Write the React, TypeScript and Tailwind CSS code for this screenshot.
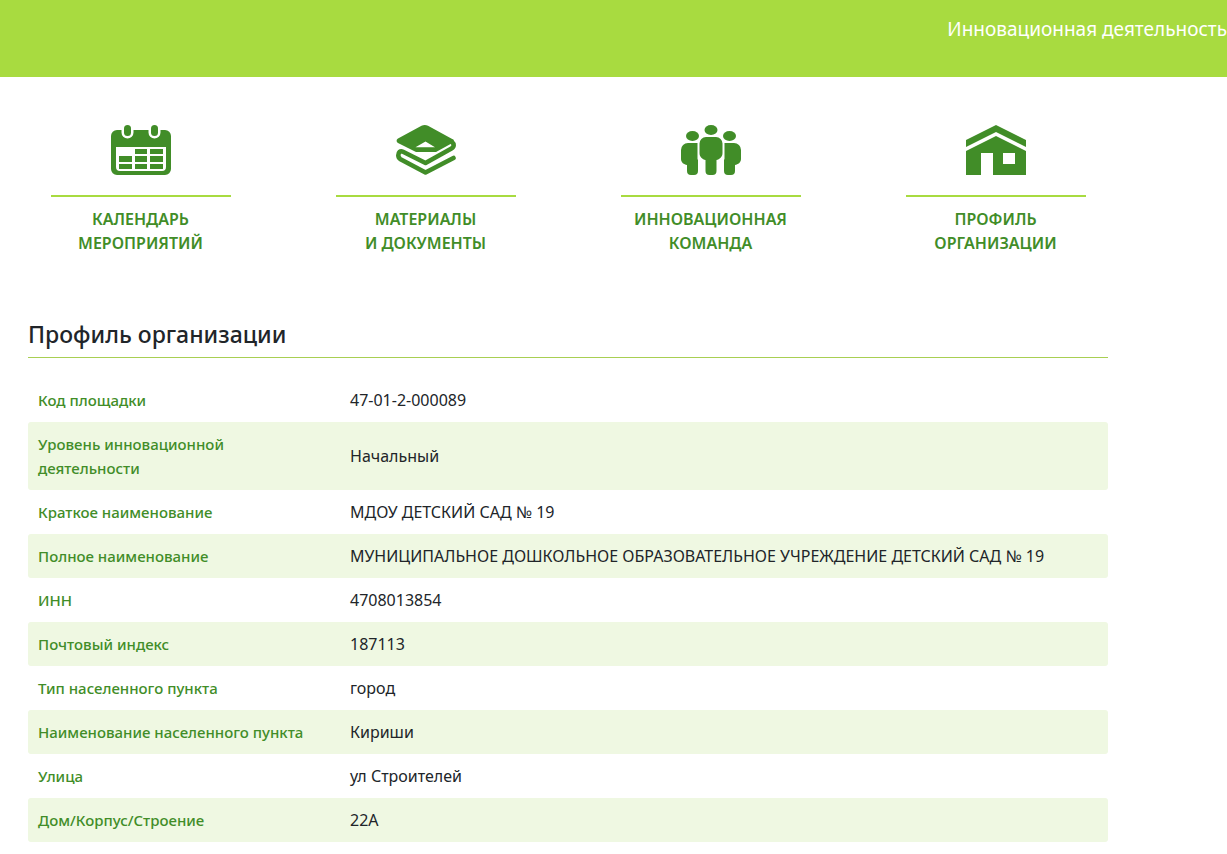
import type { ReactNode } from "react"

function CalendarIcon() {
  return (
    <svg viewBox="0 0 60 50" className="w-[60px] h-[50px]" fill="currentColor" aria-hidden="true">
      <path
        fillRule="evenodd"
        d="M6 5h4.500v2.500a6 6 0 0 0 12 0V5h15v2.500a6 6 0 0 0 12 0V5H54a6 6 0 0 1 6 6v33a6 6 0 0 1-6 6H6a6 6 0 0 1-6-6V11a6 6 0 0 1 6-6ZM5 22v20a4 4 0 0 0 4 4h42a4 4 0 0 0 4-4V22Z"
      />
      <rect x="13" y="0" width="7" height="11" rx="3.500" />
      <rect x="40" y="0" width="7" height="11" rx="3.500" />
      <path d="M24 24h12v5H24zM39 24h13v5H39zM8 31h13v6H8zM24 31h12v6H24zM39 31h13v6H39zM8 39h13v5H8zM24 39h12v5H24zM39 39h13v5H39z" />
    </svg>
  )
}

function BooksIcon() {
  return (
    <svg viewBox="0 0 60 50" className="w-[60px] h-[50px]" aria-hidden="true">
      <path
        fill="currentColor"
        fillRule="evenodd"
        d="M25.500.8 2 13.500c-1.800 1-1.800 3.500 0 4.500L20 27h20l15-8.200 3-3.800L32 .8c-2-1-4.500-1-6.500 0ZM29.500 16.500 39 22.300H19.500Z"
      />
      <path
        fill="none"
        stroke="currentColor"
        strokeWidth="4.600"
        strokeLinecap="round"
        strokeLinejoin="round"
        d="M56 17c2.300 2 2.300 5-.5 6.500L29.500 38 7 26.800c-3-1.500-4.700 1-4.700 3.500 0 2 .7 3 2.200 3.900l25 13.300L57.500 33"
      />
    </svg>
  )
}

function TeamIcon() {
  return (
    <svg viewBox="0 0 60 50" className="w-[60px] h-[50px]" fill="currentColor" aria-hidden="true">
      <ellipse cx="30" cy="5" rx="6.500" ry="5" />
      <ellipse cx="11.500" cy="11" rx="6.500" ry="5" />
      <ellipse cx="48.500" cy="11" rx="6.500" ry="5" />
      <path d="M25 12h10a6.500 6.500 0 0 1 6.500 6.500V28c0 4-3 6.500-6 7v11a4 4 0 0 1-4 4h-3a4 4 0 0 1-4-4V35c-3-.5-6-3-6-7v-9.500A6.500 6.500 0 0 1 25 12Z" />
      <path d="M7 18h9.500v15.500c0 .8.300 1 .5 1.500v11a4 4 0 0 1-4 4h-3a4 4 0 0 1-4-4v-6c-3-.5-6-2.500-6-6v-9a7 7 0 0 1 7-7Z" />
      <path d="M53 18h-9.500v15.500c0 .8-.3 1-.5 1.500v11a4 4 0 0 0 4 4h3a4 4 0 0 0 4-4v-6c3-.5 6-2.500 6-6v-9a7 7 0 0 0-7-7Z" />
    </svg>
  )
}

function HouseIcon() {
  return (
    <svg viewBox="0 0 60 50" className="w-[60px] h-[50px]" fill="currentColor" aria-hidden="true">
      <path d="M30 0 60 15v7L30 7 0 22v-7Z" />
      <path fillRule="evenodd" d="M30 11 60 26v24H27V28H15v22H0V26ZM37 28v11h12V28Z" />
    </svg>
  )
}

const links: { icon: ReactNode; top: string; bottom: string }[] = [
  { icon: <CalendarIcon />, top: "Календарь", bottom: "мероприятий" },
  { icon: <BooksIcon />, top: "Материалы", bottom: "и документы" },
  { icon: <TeamIcon />, top: "Инновационная", bottom: "команда" },
  { icon: <HouseIcon />, top: "Профиль", bottom: "организации" },
]

const rows = [
  { label: "Код площадки", value: "47-01-2-000089" },
  { label: "Уровень инновационной деятельности", value: "Начальный" },
  { label: "Краткое наименование", value: "МДОУ ДЕТСКИЙ САД № 19" },
  {
    label: "Полное наименование",
    value: "МУНИЦИПАЛЬНОЕ ДОШКОЛЬНОЕ ОБРАЗОВАТЕЛЬНОЕ УЧРЕЖДЕНИЕ ДЕТСКИЙ САД № 19",
  },
  { label: "ИНН", value: "4708013854" },
  { label: "Почтовый индекс", value: "187113" },
  { label: "Тип населенного пункта", value: "город" },
  { label: "Наименование населенного пункта", value: "Кириши" },
  { label: "Улица", value: "ул Строителей" },
  { label: "Дом/Корпус/Строение", value: "22А" },
]

export default function App() {
  return (
    <div className="bg-white text-[#212529] font-['Noto_Sans',sans-serif]">
      <header className="flex justify-end bg-[#a8db40] pt-[15px] pb-[34px] text-white">
        <p className="text-[19px] leading-7 whitespace-nowrap">Инновационная деятельность</p>
      </header>

      <main className="max-w-[1108px] pl-7 pb-3">
        <nav className="-mx-[30px] pt-12 grid grid-cols-4">
          {links.map((link) => (
            <a key={link.top} href="#" className="flex flex-col items-center text-[#418d28]">
              {link.icon}
              <span className="mt-5 pt-[10px] w-[180px] border-t-2 border-[#a8db40] text-center text-base leading-6 font-semibold uppercase">
                {link.top}
                <br />
                {link.bottom}
              </span>
            </a>
          ))}
        </nav>

        <h1 className="mt-16 pb-2 border-b border-[#a8cf52] text-[23px] leading-[30px] font-medium">
          Профиль организации
        </h1>

        <table className="mt-5 w-full table-fixed text-[15px] leading-6">
          <tbody>
            {rows.map((row) => (
              <tr key={row.label} className="group">
                <th
                  scope="row"
                  className="w-[312px] py-[10px] pl-[10px] pr-8 rounded-l-[3px] text-left font-medium text-[#418d28] group-even:bg-[#eff8e2]"
                >
                  {row.label}
                </th>
                <td className="p-[10px] rounded-r-[3px] text-base group-even:bg-[#eff8e2]">{row.value}</td>
              </tr>
            ))}
          </tbody>
        </table>
      </main>
    </div>
  )
}
